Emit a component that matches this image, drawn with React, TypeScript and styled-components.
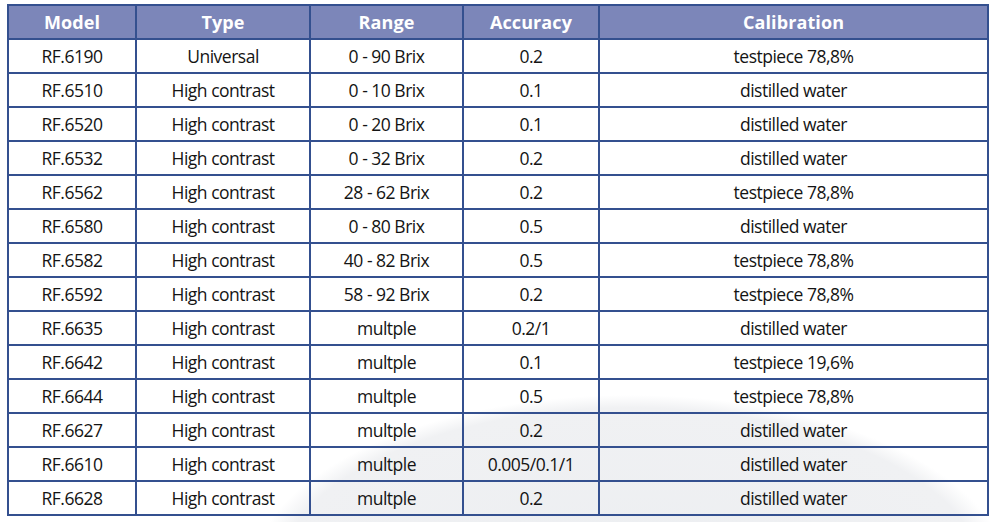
import React from "react";
import styled, { createGlobalStyle } from "styled-components";

const Global = createGlobalStyle`
  html, body { margin: 0; padding: 0; }
  body {
    width: 994px;
    height: 522px;
    overflow: hidden;
    background-color: #ffffff;
    background-image: radial-gradient(ellipse 380px 185px at 630px 580px, #eceef1 0%, #f0f1f3 93%, #ffffff 100%);
    background-repeat: no-repeat;
    font-family: "Open Sans", "Liberation Sans", sans-serif;
  }
`;

const Page = styled.div`
  padding: 4px 0 0 7px;
`;

const Table = styled.table`
  border-collapse: collapse;
  table-layout: fixed;
  width: 980px;
  border: 2px solid #34508f;
`;

const HeadCell = styled.th`
  height: 32px;
  padding: 0;
  background: #7c86b9;
  color: #ffffff;
  font-weight: 700;
  font-size: 18px;
  line-height: 26px;
  letter-spacing: 0.1px;
  text-align: center;
  border: 2px solid #34508f;
`;

const Cell = styled.td`
  height: 32px;
  padding: 0;
  color: #141414;
  font-size: 17.5px;
  font-weight: 500;
  line-height: 28px;
  letter-spacing: -0.5px;
  text-align: center;
  border: 2px solid #34508f;
`;

const widths = [128, 174, 153, 136, 389];
const headers = ["Model", "Type", "Range", "Accuracy", "Calibration"];

const rows: string[][] = [
  ["RF.6190", "Universal", "0 - 90 Brix", "0.2", "testpiece 78,8%"],
  ["RF.6510", "High contrast", "0 - 10 Brix", "0.1", "distilled water"],
  ["RF.6520", "High contrast", "0 - 20 Brix", "0.1", "distilled water"],
  ["RF.6532", "High contrast", "0 - 32 Brix", "0.2", "distilled water"],
  ["RF.6562", "High contrast", "28 - 62 Brix", "0.2", "testpiece 78,8%"],
  ["RF.6580", "High contrast", "0 - 80 Brix", "0.5", "distilled water"],
  ["RF.6582", "High contrast", "40 - 82 Brix", "0.5", "testpiece 78,8%"],
  ["RF.6592", "High contrast", "58 - 92 Brix", "0.2", "testpiece 78,8%"],
  ["RF.6635", "High contrast", "multple", "0.2/1", "distilled water"],
  ["RF.6642", "High contrast", "multple", "0.1", "testpiece 19,6%"],
  ["RF.6644", "High contrast", "multple", "0.5", "testpiece 78,8%"],
  ["RF.6627", "High contrast", "multple", "0.2", "distilled water"],
  ["RF.6610", "High contrast", "multple", "0.005/0.1/1", "distilled water"],
  ["RF.6628", "High contrast", "multple", "0.2", "distilled water"],
];

export default function App() {
  return (
    <>
      <Global />
      <Page>
        <Table>
          <colgroup>
            {widths.map((w, i) => (
              <col key={i} style={{ width: w }} />
            ))}
          </colgroup>
          <thead>
            <tr>
              {headers.map((h) => (
                <HeadCell key={h}>{h}</HeadCell>
              ))}
            </tr>
          </thead>
          <tbody>
            {rows.map((r) => (
              <tr key={r[0]}>
                {r.map((c, i) => (
                  <Cell key={i}>{c}</Cell>
                ))}
              </tr>
            ))}
          </tbody>
        </Table>
      </Page>
    </>
  );
}
